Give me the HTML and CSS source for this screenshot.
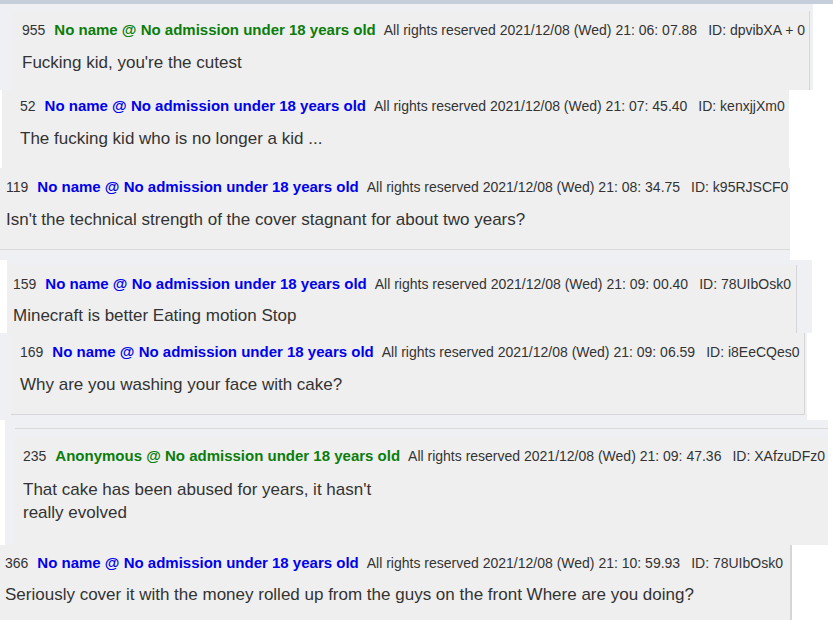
FILE: index.html
```html
<!DOCTYPE html>
<html>
<head>
<meta charset="utf-8">
<link rel="stylesheet" href="styles.css">
</head>
<body>
<div class="topbar"></div>

<div class="strip s1">
  <div class="post">
    <div class="head"><span class="num">955</span><span class="name green">No name @ No admission under 18 years old</span><span class="meta">All rights reserved 2021/12/08 (Wed) 21: 06: 07.88</span><span class="uid">ID: dpvibXA + 0</span></div>
    <div class="body">Fucking kid, you're the cutest</div>
  </div>
</div>

<div class="strip s2">
  <div class="post">
    <div class="head"><span class="num">52</span><span class="name blue">No name @ No admission under 18 years old</span><span class="meta">All rights reserved 2021/12/08 (Wed) 21: 07: 45.40</span><span class="uid">ID: kenxjjXm0</span></div>
    <div class="body">The fucking kid who is no longer a kid ...</div>
  </div>
</div>

<div class="strip s3">
  <div class="post">
    <div class="head"><span class="num">119</span><span class="name blue">No name @ No admission under 18 years old</span><span class="meta">All rights reserved 2021/12/08 (Wed) 21: 08: 34.75</span><span class="uid">ID: k95RJSCF0</span></div>
    <div class="body">Isn't the technical strength of the cover stagnant for about two years?</div>
  </div>
</div>

<div class="strip s4">
  <div class="post">
    <div class="head"><span class="num">159</span><span class="name blue">No name @ No admission under 18 years old</span><span class="meta">All rights reserved 2021/12/08 (Wed) 21: 09: 00.40</span><span class="uid">ID: 78UIbOsk0</span></div>
    <div class="body">Minecraft is better Eating motion Stop</div>
  </div>
</div>

<div class="strip s5">
  <div class="post">
    <div class="head"><span class="num">169</span><span class="name blue">No name @ No admission under 18 years old</span><span class="meta">All rights reserved 2021/12/08 (Wed) 21: 09: 06.59</span><span class="uid">ID: i8EeCQes0</span></div>
    <div class="body">Why are you washing your face with cake?</div>
  </div>
</div>

<div class="strip s6">
  <div class="rule"></div>
  <div class="post">
    <div class="head"><span class="num">235</span><span class="name green">Anonymous @ No admission under 18 years old</span><span class="meta">All rights reserved 2021/12/08 (Wed) 21: 09: 47.36</span><span class="uid">ID: XAfzuDFz0</span></div>
    <div class="body">That cake has been abused for years, it hasn't really evolved</div>
  </div>
</div>

<div class="strip s7">
  <div class="post">
    <div class="head"><span class="num">366</span><span class="name blue">No name @ No admission under 18 years old</span><span class="meta">All rights reserved 2021/12/08 (Wed) 21: 10: 59.93</span><span class="uid">ID: 78UIbOsk0</span></div>
    <div class="body">Seriously cover it with the money rolled up from the guys on the front Where are you doing?</div>
  </div>
</div>
</body>
</html>
```
FILE: styles.css
```css
html, body {
  margin: 0;
  padding: 0;
  background: #ffffff;
}
body {
  font-family: "Liberation Sans", Arial, sans-serif;
  color: #333333;
  width: 833px;
  height: 620px;
  overflow: hidden;
}
.topbar {
  height: 4px;
  background: #c6cedb;
}
.strip {
  box-sizing: border-box;
}
.post {
  background: #efefef;
}
.head {
  font-size: 14px;
  line-height: 16px;
  height: 16px;
  white-space: nowrap;
  color: #333333;
}
.num {
  margin-right: 9px;
}
.name {
  font-weight: bold;
  font-size: 15px;
  margin-right: 8px;
}
.blue { color: #0000ee; }
.green { color: #0a7d0a; }
.uid {
  margin-left: 11px;
}
.body {
  font-size: 17px;
  line-height: 20px;
  margin-top: 15px;
  white-space: nowrap;
}

/* strip 1 */
.s1 {
  width: 813px;
  background: #eff0f4;
  padding: 7px 3px 0 13px;
}
.s1 .post {
  border-right: 1px solid #d6d6d6;
  padding: 11px 9px 17px 9px;
}

/* strip 2 */
.s2 {
  width: 789px;
  padding-left: 2px;
}
.s2 .post {
  padding: 8px 18px 19px 18px;
}

/* strip 3 */
.s3 {
  width: 790px;
  background: #eff0f4;
  padding-bottom: 10px;
}
.s3 .post {
  border-bottom: 1px solid #d9d9d9;
  padding: 11px 6px 19px 6px;
}
.s3 .body { margin-top: 15px; }

/* strip 4 */
.s4 {
  width: 805px;
  margin-left: 7px;
  background: #eff0f4;
  padding: 5px 15px 0 0;
}
.s4 .post {
  border-right: 1px solid #d6d6d6;
  padding: 11px 6px 7px 6px;
}
.s4 .body { margin-top: 14px; }

/* strip 5 */
.s5 {
  width: 807px;
  background: #eff0f4;
  padding: 0 2px 5px 11px;
}
.s5 .post {
  border-right: 1px solid #d6d6d6;
  border-bottom: 1px solid #d6d6d6;
  padding: 11px 9px 19px 9px;
}

/* strip 6 */
.s6 {
  width: 823px;
  margin-left: 5px;
  background: #eff0f4;
  padding: 8px 0 0 10px;
}
.s6 .rule {
  height: 8px;
  border-top: 1px solid #d9d9d9;
}
.s6 .post {
  padding: 11px 8px 21px 8px;
}
.s6 .body {
  white-space: normal;
  width: 360px;
  line-height: 23px;
  margin-top: 14px;
}

/* strip 7 */
.s7 {
  width: 792px;
}
.s7 .post {
  border-right: 2px solid #d6d6d6;
  padding: 10px 5px 15px 5px;
}
.s7 .body { margin-top: 14px; }
```
